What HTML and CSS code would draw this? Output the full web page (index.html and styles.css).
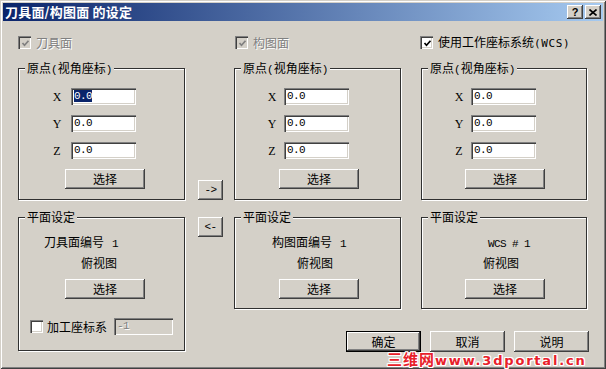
FILE: index.html
```html
<!DOCTYPE html>
<html lang="zh-CN">
<head>
<meta charset="utf-8">
<title>刀具面/构图面 的设定</title>
<link rel="stylesheet" href="styles.css">
</head>
<body>
<div class="window">
  <div class="titlebar">
    <span class="title">刀具面/构图面 的设定</span>
    <div class="tbtns">
      <div class="tbtn"><span class="q">?</span></div>
      <div class="tbtn"><svg width="8" height="7" viewBox="0 0 8 7"><path d="M0.5 0.5 L7.5 6.5 M7.5 0.5 L0.5 6.5" stroke="#000" stroke-width="1.6" fill="none"/></svg></div>
    </div>
  </div>

  <div class="content">
    <!-- row 1: checkboxes -->
    <label class="chk c1">
      <span class="box disabled"><svg width="9" height="9" viewBox="0 0 9 9"><path d="M1.5 4 L3.5 6.3 L7.5 1.8" stroke="#808080" stroke-width="1.7" fill="none"/></svg></span>
      <span class="dis-text">刀具面</span>
    </label>
    <label class="chk c3 ml1">
      <span class="box disabled"><svg width="9" height="9" viewBox="0 0 9 9"><path d="M1.5 4 L3.5 6.3 L7.5 1.8" stroke="#808080" stroke-width="1.7" fill="none"/></svg></span>
      <span class="dis-text">构图面</span>
    </label>
    <label class="chk c5 mln1">
      <span class="box"><svg width="9" height="9" viewBox="0 0 9 9"><path d="M1.5 4 L3.5 6.3 L7.5 1.8" stroke="#000" stroke-width="1.7" fill="none"/></svg></span>
      <span>使用工作座标系统<span class="lat wide">(WCS)</span></span>
    </label>

    <!-- row 3: origin groups -->
    <div class="group r3 c1 g-left">
      <span class="legend">原点<span class="paren">(</span>视角座标<span class="paren">)</span></span>
      <div class="coords">
        <span class="axis">X</span><div class="edit"><span class="sel">0.0</span></div>
        <span class="axis">Y</span><div class="edit">0.0</div>
        <span class="axis">Z</span><div class="edit">0.0</div>
      </div>
      <div class="btn gbtn">选择</div>
    </div>

    <div class="btn arrow arrow-r r3 c2">-&gt;</div>

    <div class="group r3 c3 g-mid">
      <span class="legend">原点<span class="paren">(</span>视角座标<span class="paren">)</span></span>
      <div class="coords">
        <span class="axis">X</span><div class="edit">0.0</div>
        <span class="axis">Y</span><div class="edit">0.0</div>
        <span class="axis">Z</span><div class="edit">0.0</div>
      </div>
      <div class="btn gbtn">选择</div>
    </div>

    <div class="group r3 c5 g-right">
      <span class="legend">原点<span class="paren">(</span>视角座标<span class="paren">)</span></span>
      <div class="coords">
        <span class="axis">X</span><div class="edit">0.0</div>
        <span class="axis">Y</span><div class="edit">0.0</div>
        <span class="axis">Z</span><div class="edit">0.0</div>
      </div>
      <div class="btn gbtn">选择</div>
    </div>

    <!-- row 5: plane groups -->
    <div class="group plane rows-5-8 c1 g-left">
      <span class="legend">平面设定</span>
      <div class="pl-line pl-first">刀具面编号<span class="lat num">1</span></div>
      <div class="pl-line pl-view">俯视图</div>
      <div class="btn gbtn">选择</div>
      <div class="mcs">
        <span class="box"></span>
        <span class="mcs-label">加工座标系</span>
        <div class="edit edit-dis"><span class="lat">-1</span></div>
      </div>
    </div>

    <div class="btn arrow arrow-l r5 c2">&lt;-</div>

    <div class="group plane r5 c3 g-mid">
      <span class="legend">平面设定</span>
      <div class="pl-line pl-first">构图面编号<span class="lat num">1</span></div>
      <div class="pl-line pl-view">俯视图</div>
      <div class="btn gbtn">选择</div>
    </div>

    <div class="group plane r5 c5 g-right">
      <span class="legend">平面设定</span>
      <div class="pl-line pl-first"><span class="lat">WCS # 1</span></div>
      <div class="pl-line pl-view">俯视图</div>
      <div class="btn gbtn">选择</div>
    </div>

    <!-- row 7: dialog buttons -->
    <div class="actions">
      <div class="btn dbtn default">确定</div>
      <div class="btn dbtn">取消</div>
      <div class="btn dbtn">说明</div>
    </div>
  </div>

  <div class="watermark"><span class="wm-cn">三维网</span><span class="wm-en">www.3dportal.cn</span></div>
</div>
</body>
</html>
```

FILE: styles.css
```css
* { box-sizing: border-box; }

body {
  margin: 0;
  background: #d4d0c8;
}

.window {
  position: relative;
  width: 606px;
  height: 369px;
  padding: 3px;
  background: #d4d0c8;
  box-shadow:
    inset 1px 1px 0 #d4d0c8,
    inset -1px -1px 0 #404040,
    inset 2px 2px 0 #ffffff,
    inset -2px -2px 0 #808080;
  font-family: "Noto Sans CJK SC", sans-serif;
  font-size: 12px;
  color: #000;
  line-height: 14px;
}

/* ---------- title bar ---------- */
.titlebar {
  height: 18px;
  display: flex;
  align-items: center;
  justify-content: space-between;
  padding: 0 2px 0 2px;
  background: linear-gradient(90deg, #0a246a 0%, #a6caf0 100%);
}

.title {
  color: #fff;
  font-weight: bold;
  font-size: 13px;
  line-height: 18px;
  letter-spacing: 0.2px;
}

.tbtns {
  display: flex;
  gap: 2px;
}

.tbtn {
  width: 16px;
  height: 14px;
  display: flex;
  align-items: center;
  justify-content: center;
  background: #d4d0c8;
  box-shadow:
    inset -1px -1px 0 #404040,
    inset 1px 1px 0 #ffffff,
    inset -2px -2px 0 #808080;
}

.q {
  font-family: "Liberation Sans", sans-serif;
  font-weight: bold;
  font-size: 11px;
  line-height: 11px;
}

/* ---------- layout grid ---------- */
.content {
  display: grid;
  grid-template-columns: 168px 48px 168px 19px 167px;
  grid-template-rows: 13px 19px 133px 16px 93px 21px 21px;
  padding: 15px 0 0 15px;
}

.c1 { grid-column: 1; }
.c2 { grid-column: 2; }
.c3 { grid-column: 3; }
.c5 { grid-column: 5; }
.r3 { grid-row: 3; }
.r5 { grid-row: 5; }
.rows-5-8 { grid-row: 5 / 8; }

/* ---------- checkboxes ---------- */
.chk {
  grid-row: 1;
  display: flex;
  align-items: center;
  gap: 5px;
  white-space: nowrap;
}
.ml1 { margin-left: 1px; }
.mln1 { margin-left: -1px; }

.box {
  width: 13px;
  height: 13px;
  flex: none;
  display: flex;
  align-items: center;
  justify-content: center;
  background: #fff;
  box-shadow:
    inset 1px 1px 0 #808080,
    inset 2px 2px 0 #404040,
    inset -1px -1px 0 #ffffff,
    inset -2px -2px 0 #d4d0c8;
}
.box svg { margin: 1px 0 0 1px; }
.box.disabled { background: #d4d0c8; }

.dis-text {
  color: #808080;
  text-shadow: 1px 1px 0 #fff;
}

.lat {
  font-family: "Liberation Mono", monospace;
  font-size: 11px;
  letter-spacing: -0.6px;
  white-space: pre;
}
.lat.wide {
  font-family: "DejaVu Sans Mono", monospace;
  font-size: 11px;
  letter-spacing: 0.6px;
}

/* ---------- group boxes ---------- */
.group {
  position: relative;
  border: 1px solid #303030;
  margin: 0 1px 1px 0;
  box-shadow: 1px 1px 0 #fff, inset 1px 1px 0 #fff;
  display: flex;
  flex-direction: column;
  align-items: flex-start;
}

.legend {
  position: absolute;
  top: -8px;
  left: 6px;
  padding: 0 2px;
  background: #d4d0c8;
  line-height: 14px;
  white-space: nowrap;
}
.paren {
  font-family: "Liberation Mono", monospace;
  font-size: 11px;
}

.coords {
  display: grid;
  grid-template-columns: 12px 65px;
  column-gap: 6px;
  row-gap: 10px;
  align-items: center;
  padding: 19px 0 0 31px;
}
.g-left .coords { padding-left: 32px; column-gap: 8px; }

.axis {
  font-family: "Liberation Serif", serif;
  font-size: 12px;
  text-align: center;
  line-height: 12px;
}

.edit {
  width: 65px;
  height: 17px;
  padding: 2px 0 0 3px;
  background: #fff;
  box-shadow:
    inset 1px 1px 0 #808080,
    inset 2px 2px 0 #404040,
    inset -1px -1px 0 #ffffff,
    inset -2px -2px 0 #d4d0c8;
  font-family: "Liberation Mono", monospace;
  font-size: 11px;
  letter-spacing: -0.6px;
  line-height: 13px;
}
.sel {
  background: #0a246a;
  color: #fff;
}
.edit-dis {
  width: 59px;
  background: #d4d0c8;
  color: #808080;
  text-shadow: 1px 1px 0 #fff;
}

/* ---------- buttons ---------- */
.btn {
  display: flex;
  align-items: center;
  justify-content: center;
  background: #d4d0c8;
  box-shadow:
    inset -1px -1px 0 #404040,
    inset 1px 1px 0 #ffffff,
    inset -2px -2px 0 #808080;
  white-space: nowrap;
}

.gbtn {
  width: 80px;
  height: 20px;
  margin-top: 10px;
  margin-left: 43px;
}
.g-left .gbtn { margin-left: 46px; }
.g-mid .gbtn { margin-left: 44px; }

.arrow {
  width: 25px;
  height: 20px;
  margin-left: 12px;
  font-family: "Liberation Mono", monospace;
  font-size: 11px;
  letter-spacing: -0.6px;
}
.arrow-r { align-self: end; margin-bottom: 1px; }
.arrow-l { align-self: start; }

.actions {
  grid-row: 7;
  grid-column: 3 / 6;
  display: flex;
  justify-content: flex-end;
  gap: 9px;
  margin-right: -1px;
}
.dbtn {
  width: 75px;
  height: 21px;
}
.dbtn.default {
  box-shadow:
    inset 0 0 0 1px #000,
    inset -2px -2px 0 #404040,
    inset 2px 2px 0 #ffffff,
    inset -3px -3px 0 #808080;
}

/* ---------- plane groups ---------- */
.plane { padding-top: 17px; }
.pl-line { line-height: 14px; white-space: nowrap; }
.pl-view { margin-top: 5px; padding-left: 62px; }
.plane .gbtn { margin-top: 9px; }
.num { margin-left: 8px; }

.g-left .pl-first { padding-left: 25px; }
.g-mid .pl-first { padding-left: 37px; }
.g-right .pl-first { padding-left: 66px; }
.g-right .pl-view { padding-left: 61px; }

.mcs {
  display: flex;
  align-items: center;
  margin-top: 19px;
  padding-left: 11px;
}
.mcs-label { margin-left: 4px; }
.mcs .edit { margin-left: 7px; }

/* ---------- watermark (overlay) ---------- */
.watermark {
  position: absolute;
  left: 387px;
  top: 351px;
  display: flex;
  align-items: baseline;
  color: #e8202a;
  font-weight: bold;
  white-space: nowrap;
  text-shadow:
    1px 0 0 #fff, -1px 0 0 #fff, 0 1px 0 #fff, 0 -1px 0 #fff,
    1px 1px 0 #fff, -1px -1px 0 #fff, 1px -1px 0 #fff, -1px 1px 0 #fff;
}
.wm-cn {
  font-size: 15px;
  line-height: 16px;
  letter-spacing: 1px;
}
.wm-en {
  font-family: "DejaVu Sans", sans-serif;
  font-size: 13px;
  line-height: 16px;
  letter-spacing: 1.8px;
}
```
